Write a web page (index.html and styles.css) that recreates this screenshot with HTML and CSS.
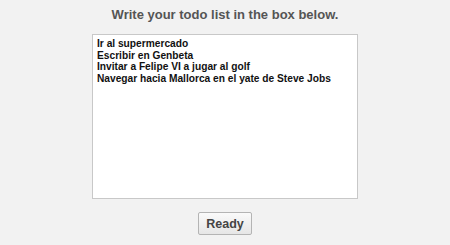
FILE: index.html
```html
<!DOCTYPE html>
<html>
<head>
<meta charset="utf-8">
<link rel="stylesheet" href="styles.css">
</head>
<body>
<div class="page">
  <h1 class="title">Write your todo list in the box below.</h1>
  <textarea class="todo">Ir al supermercado
Escribir en Genbeta
Invitar a Felipe VI a jugar al golf
Navegar hacia Mallorca en el yate de Steve Jobs</textarea>
  <button class="ready">Ready</button>
</div>
</body>
</html>
```

FILE: styles.css
```css
html, body {
  margin: 0;
  padding: 0;
  background: #f2f2f2;
}
.page {
  width: 450px;
  height: 245px;
  display: flex;
  flex-direction: column;
  align-items: center;
  font-family: "Liberation Sans", Arial, sans-serif;
}
.title {
  margin: 5px 0 0 0;
  font-size: 13px;
  line-height: 20px;
  font-weight: bold;
  color: #555555;
}
.todo {
  box-sizing: border-box;
  margin-top: 9px;
  width: 266px;
  height: 165px;
  border: 1px solid #c8c8c8;
  background: #ffffff;
  padding: 3px 4px;
  font-family: "Liberation Sans", Arial, sans-serif;
  font-size: 10.2px;
  line-height: 11.67px;
  font-weight: bold;
  color: #111111;
  resize: none;
  outline: none;
}
.ready {
  box-sizing: border-box;
  margin-top: 13px;
  width: 54px;
  height: 23px;
  border: 1px solid #b4b4b4;
  border-radius: 2px;
  background: linear-gradient(#fafafa, #e6e6e6);
  font-family: "Liberation Sans", Arial, sans-serif;
  font-size: 12.5px;
  font-weight: bold;
  color: #444444;
  padding: 0;
}
```
